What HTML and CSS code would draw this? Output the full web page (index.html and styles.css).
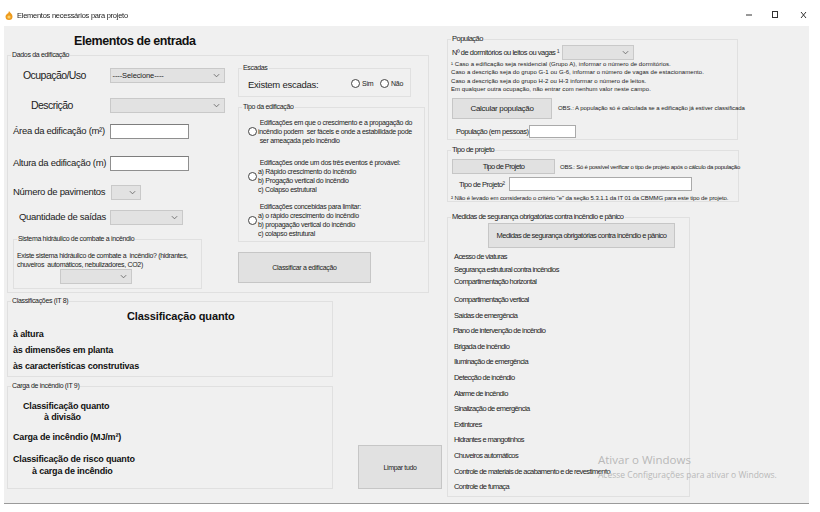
FILE: index.html
```html
<!DOCTYPE html>
<html lang="pt-BR">
<head>
<meta charset="utf-8">
<title>Elementos necessários para projeto</title>
<link rel="stylesheet" href="styles.css">
</head>
<body>
<div class="window">
  <header class="titlebar">
    <svg class="app-icon" viewBox="0 0 8 9" width="8" height="9"><path d="M4 0C5 2 7.500 3 7.500 5.500A3.500 3.500 0 0 1 .5 5.500C.5 4 2 3.500 2 2.500C3 3 3.500 2 4 0Z" fill="#ee9a1c"/><circle cx="4" cy="6" r="1.600" fill="#f9cf6a"/></svg>
    <span class="title-text">Elementos necessários para projeto</span>
    <svg class="controls" viewBox="0 0 64 10" width="64" height="10"><path d="M0 5H6" stroke="#333" fill="none"/><rect x="26.500" y="1.500" width="5" height="6" stroke="#333" fill="none"/><path d="M55 2L60 8M60 2L55 8" stroke="#333" fill="none"/></svg>
  </header>
  <main class="client">
    <section class="col-left">
      <h1 class="main-title">Elementos de entrada</h1>
      <fieldset class="group g-dados">
        <legend>Dados da edificação</legend>
        <div class="dados-inner">
          <div class="form-col">
            <div class="row r-ocup"><label class="lbl big l-ocup">Ocupação/Uso</label><div class="select s-115"><span>----Selecione----</span><svg class="chev" viewBox="0 0 8 5"><path d="M1 1L4 4L7 1"/></svg></div></div>
            <div class="row r-desc"><label class="lbl big l-desc">Descrição</label><div class="select s-115"><svg class="chev" viewBox="0 0 8 5"><path d="M1 1L4 4L7 1"/></svg></div></div>
            <div class="row r-area"><label class="lbl l-area">Área da edificação (m²)</label><div class="input i-79"></div></div>
            <div class="row r-alt"><label class="lbl l-alt">Altura da edificação (m)</label><div class="input i-79"></div></div>
            <div class="row r-pav"><label class="lbl l-pav">Número de pavimentos</label><div class="select s-30"><svg class="chev" viewBox="0 0 8 5"><path d="M1 1L4 4L7 1"/></svg></div></div>
            <div class="row r-said"><label class="lbl l-said">Quantidade de saídas</label><div class="select s-73"><svg class="chev" viewBox="0 0 8 5"><path d="M1 1L4 4L7 1"/></svg></div></div>
            <fieldset class="group g-hidro">
              <legend>Sistema hidráulico de combate a incêndio</legend>
              <p class="hidro-text">Existe sistema hidráulico de combate a&nbsp; incêndio? (hidrantes,<br>chuveiros&nbsp; automáticos, nebulizadores, CO2)</p>
              <div class="select s-72"><svg class="chev" viewBox="0 0 8 5"><path d="M1 1L4 4L7 1"/></svg></div>
            </fieldset>
          </div>
          <div class="side-col">
            <fieldset class="group g-esc">
              <legend>Escadas</legend>
              <div class="esc-row">
                <span class="esc-label">Existem escadas:</span>
                <span class="radio"></span><span class="opt o-sim">Sim</span>
                <span class="radio"></span><span class="opt">Não</span>
              </div>
            </fieldset>
            <fieldset class="group g-tipo">
              <legend>Tipo da edificação</legend>
              <div class="tipo-opt t1"><span class="radio"></span><p>&nbsp;Edificações em que o crescimento e a propagação do<br>incêndio podem&nbsp; ser fáceis e onde a estabilidade pode<br>&nbsp;ser ameaçada pelo incêndio</p></div>
              <div class="tipo-opt t2"><span class="radio"></span><p>&nbsp;Edificações onde um dos três eventos é provável:<br>a) Rápido crescimento do incêndio<br>b) Progação vertical do incêndio<br>c) Colapso estrutural</p></div>
              <div class="tipo-opt t3"><span class="radio"></span><p>&nbsp;Edificações concebidas para limitar:<br>a) o rápido crescimento do incêndio<br>b) propagação vertical do incêndio<br>c) colapso estrutural</p></div>
            </fieldset>
            <button class="btn b-class">Classificar a edificação</button>
          </div>
        </div>
      </fieldset>
      <fieldset class="group g-class">
        <legend>Classificações (IT 8)</legend>
        <h2 class="class-title">Classificação quanto</h2>
        <p class="bold-row br1">à altura</p>
        <p class="bold-row br2">às dimensões em planta</p>
        <p class="bold-row br3">às características construtivas</p>
      </fieldset>
      <div class="bottom-row">
        <fieldset class="group g-carga">
          <legend>Carga de incêndio (IT 9)</legend>
          <p class="bold-row c1">Classificação quanto<br><span class="c1b">à divisão</span></p>
          <p class="bold-row c2">Carga de incêndio (MJ/m²)</p>
          <p class="bold-row c3">Classificação de risco quanto<br><span class="c3b">à carga de incêndio</span></p>
        </fieldset>
        <button class="btn b-limpar">Limpar tudo</button>
      </div>
    </section>
    <section class="col-right">
      <fieldset class="group g-pop">
        <legend>População</legend>
        <div class="pop-top"><span class="txt8">Nº de dormitórios ou leitos ou vagas ¹</span><div class="select s-72"><svg class="chev" viewBox="0 0 8 5"><path d="M1 1L4 4L7 1"/></svg></div></div>
        <p class="notes">¹ Caso a edificação seja residencial (Grupo A), informar o número de dormitórios.<br>Caso a descrição seja do grupo G-1 ou G-6, informar o número de vagas de estacionamento.<br>Caso a descrição seja do grupo H-2 ou H-3 informar o número de leitos.<br>Em qualquer outra ocupação, não entrar com nenhum valor neste campo.</p>
        <div class="calc-row"><button class="btn b-calc">Calcular população</button><span class="obs">OBS.: A população só é calculada se a edificação já estiver classificada</span></div>
        <div class="pess-row"><span class="txt8">População (em pessoas)</span><div class="input i-47"></div></div>
      </fieldset>
      <fieldset class="group g-proj">
        <legend>Tipo de projeto</legend>
        <div class="calc-row proj-row"><button class="btn b-proj">Tipo de Projeto</button><span class="obs o-proj">OBS.: Só é possível verificar o tipo de projeto após o cálculo da população</span></div>
        <div class="proj-field"><span class="txt8">Tipo de Projeto²</span><div class="input i-183"></div></div>
        <p class="notes n-proj">² Não é levado em considerado o critério  "e" da seção 5.3.1.1 da IT 01 da CBMMG para este tipo de projeto.</p>
      </fieldset>
      <fieldset class="group g-med">
        <legend>Medidas de segurança obrigatórias contra incêndio e pânico</legend>
        <button class="btn b-med">Medidas de segurança obrigatórias contra incêndio e pânico</button>
        <ul class="med-list">
          <li class="tight">Acesso de viaturas</li>
          <li class="tight">Segurança estrutural contra incêndios</li>
          <li class="tight">Compartimentação horizontal</li>
          <li>Compartimentação vertical</li>
          <li>Saídas de emergência</li>
          <li class="out">Plano de intervenção de incêndio</li>
          <li>Brigada de incêndio</li>
          <li>Iluminação de emergência</li>
          <li>Detecção de incêndio</li>
          <li>Alarme de incêndio</li>
          <li>Sinalização de emergência</li>
          <li>Extintores</li>
          <li>Hidrantes e mangotinhos</li>
          <li>Chuveiros automáticos</li>
          <li>Controle de materiais de acabamento e de revestimento</li>
          <li>Controle de fumaça</li>
        </ul>
      </fieldset>
    </section>
    <div class="watermark"><div class="wm1">Ativar o Windows</div><div class="wm2">Acesse Configurações para ativar o Windows.</div></div>
  </main>
</div>
</body>
</html>
```
FILE: styles.css
```css
* { box-sizing: border-box; }
html, body { margin: 0; padding: 0; }
body { width: 820px; height: 512px; background: #fff; font-family: "Liberation Sans", Arial, sans-serif; color: #1c1c1c; overflow: hidden; }
p, h1, h2, ul { margin: 0; padding: 0; }
.window { width: 820px; height: 512px; filter: blur(0.3px); }

.titlebar { height: 26px; display: flex; align-items: center; padding: 4px 10px 0 5px; }
.app-icon { flex: none; }
.title-text { font-size: 7.500px; letter-spacing: -0.26px; margin-left: 4px; color: #222; }
.controls { margin-left: auto; }

.client { position: relative; height: 478px; margin: 0 11px 0 4px; background: #f0f0f0; border-bottom: 1px solid #9a9a9a; display: flex; }
.col-left { width: 441px; flex: none; padding-left: 3px; }
.col-right { width: 300px; flex: none; margin-left: 2px; padding-top: 8px; }

.main-title { height: 24px; font-size: 12.500px; line-height: 30px; font-weight: 700; padding-left: 67px; letter-spacing: -0.42px; color: #111; }

.group { margin: 0; padding: 0; border: 1px solid #e0e0e0; min-width: 0; display: block; }
.group > legend { font-size: 7px; line-height: 10px; height: 10px; padding: 0 1px; margin-left: 3px; letter-spacing: -0.33px; color: #222; }
.col-right .group > legend { font-size: 7.500px; letter-spacing: -0.5px; }

.g-dados { width: 422px; height: 243px; }
.dados-inner { display: flex; padding-left: 5px; }
.form-col { width: 225px; flex: none; }
.side-col { padding-top: 3px; }

.row { display: flex; align-items: center; }
.lbl { flex: none; font-size: 9.500px; letter-spacing: -0.3px; padding-bottom: 2px; color: #222; white-space: nowrap; }
.lbl.big { font-size: 10.500px; letter-spacing: -0.55px; }
.r-ocup { margin-top: 8px; height: 15px; }
.r-desc { margin-top: 15px; height: 15px; }
.r-area { margin-top: 11px; height: 14px; }
.r-alt { margin-top: 18px; height: 15px; }
.r-pav { margin-top: 14px; height: 15px; }
.r-said { margin-top: 10px; height: 15px; }
.l-ocup { width: 97px; padding-left: 10px; }
.l-desc { width: 97px; padding-left: 18px; }
.l-area { width: 97px; }
.l-alt { width: 97px; }
.l-pav { width: 98px; }
.l-said { width: 97px; padding-left: 6px; }

.select { position: relative; flex: none; height: 15px; background: #e2e2e2; border: 1px solid #c9c9c9; font-size: 7.500px; line-height: 13px; padding-left: 1.500px; letter-spacing: -0.1px; }
.chev { position: absolute; right: 4px; top: 4px; width: 7px; height: 5px; fill: none; stroke: #666; stroke-width: 1; }
.s-115 { width: 115px; }
.s-30 { width: 30px; }
.s-73 { width: 73px; }
.s-72 { width: 72px; }
.input { flex: none; height: 15px; background: #fff; border: 1px solid #8f8f8f; border-top-color: #7d7d7d; }
.i-79 { width: 79px; }
.i-47 { width: 47px; height: 13px; border-color: #aaa; }
.i-183 { width: 183px; height: 14px; border-color: #aaa; }

.g-hidro { width: 189px; height: 55px; margin-top: 9px; }
.hidro-text { font-size: 7px; line-height: 9px; letter-spacing: -0.32px; padding-left: 3px; margin-top: 7px; white-space: nowrap; color: #222; }
.g-hidro .select { margin-left: 46px; margin-top: 0; }

.g-esc { width: 173px; height: 34px; }
.esc-row { display: flex; align-items: center; padding-left: 9px; height: 17px; margin-top: 2px; }
.esc-label { font-size: 9.500px; letter-spacing: -0.25px; width: 103px; flex: none; padding-top: 1px; }
.radio { flex: none; display: block; width: 9px; height: 9px; border: 1px solid #444; border-radius: 50%; background: #fff; }
.opt { font-size: 7px; letter-spacing: -0.2px; margin-left: 2px; width: 19px; }
.o-sim { width: 18px; }

.g-tipo { width: 187px; height: 140px; margin-top: 5px; }
.tipo-opt { display: flex; align-items: center; padding-left: 9px; font-size: 7px; line-height: 9px; letter-spacing: -0.29px; white-space: nowrap; color: #222; }
.tipo-opt p { margin-left: 1px; }
.t1 { margin-top: 6px; }
.t2 { margin-top: 13px; }
.t3 { margin-top: 8px; }

.btn { display: flex; flex: none; align-items: center; justify-content: center; padding: 0; background: #e1e1e1; border: 1px solid #c6c6c6; font-family: inherit; font-size: 7px; letter-spacing: -0.3px; color: #222; white-space: nowrap; }
.b-class { width: 133px; height: 31px; margin-top: 10px; }

.g-class { width: 326px; height: 81px; margin-top: 3px; }
.class-title { font-size: 11px; line-height: 12px; font-weight: 700; padding-left: 119px; margin-top: 4px; letter-spacing: -0.12px; color: #111; }
.bold-row { font-size: 9px; line-height: 11px; font-weight: 700; padding-left: 5px; letter-spacing: -0.18px; color: #111; white-space: nowrap; }
.br1 { margin-top: 7px; }
.br2 { margin-top: 5px; }
.br3 { margin-top: 5px; }

.bottom-row { display: flex; align-items: flex-start; }
.g-carga { width: 326px; height: 108px; margin-top: 4px; }
.c1 { margin-top: 10px; padding-left: 15px; }
.c1b { padding-left: 21px; }
.c2 { margin-top: 9px; }
.c3 { margin-top: 10px; line-height: 12px; }
.c3b { padding-left: 19px; }
.b-limpar { width: 84px; height: 44px; margin-top: 68px; margin-left: 25px; letter-spacing: -0.35px; }

.txt8 { font-size: 7.500px; letter-spacing: -0.47px; color: #222; white-space: nowrap; }
.g-pop { width: 291px; height: 106px; }
.pop-top { display: flex; align-items: center; padding-left: 4px; height: 15px; margin-top: 1px; }
.pop-top .select { margin-left: 3px; }
.notes { font-size: 6px; line-height: 8.400px; padding-left: 3px; margin-top: 0; letter-spacing: 0.05px; white-space: nowrap; color: #222; }
.calc-row { display: flex; align-items: center; padding-left: 4px; margin-top: 4px; }
.b-calc { width: 100px; height: 21px; font-size: 8px; letter-spacing: -0.3px; }
.obs { font-size: 6px; letter-spacing: -0.05px; margin-left: 6px; white-space: nowrap; color: #222; }
.o-proj { margin-left: 5px; letter-spacing: -0.25px; }
.pess-row { display: flex; align-items: center; padding-left: 8px; margin-top: 6px; }
.pess-row .input { margin-left: 0; }

.g-proj { width: 292px; height: 57px; margin-top: 5px; }
.proj-row { margin-top: 4px; }
.b-proj { width: 103px; height: 15px; font-size: 7.500px; letter-spacing: -0.6px; }
.proj-field { display: flex; align-items: center; padding-left: 11px; margin-top: 3px; }
.proj-field .input { margin-left: 4px; }
.n-proj { margin-top: 3px; letter-spacing: -0.1px; }

.g-med { width: 243px; height: 285px; margin-top: 10px; }
.b-med { width: 187px; height: 25px; margin-left: 40px; margin-top: 1px; font-size: 7.500px; letter-spacing: -0.53px; }
.med-list { list-style: none; padding-left: 6px; margin-top: 2px; font-size: 7.500px; letter-spacing: -0.58px; color: #222; }
.med-list li { height: 15.600px; line-height: 15.600px; white-space: nowrap; }
.med-list li.tight { height: 13px; line-height: 13px; }
.med-list li.tight:nth-child(3) { height: 16px; line-height: 12px; }
.med-list li.out { margin-left: -1px; }

.watermark { position: absolute; left: 594px; top: 426px; color: #b8b8b8; pointer-events: none; font-family: "Open Sans", sans-serif; white-space: nowrap; }
.wm1 { font-size: 11.500px; line-height: 16px; }
.wm2 { font-size: 8.500px; line-height: 14px; }
```
